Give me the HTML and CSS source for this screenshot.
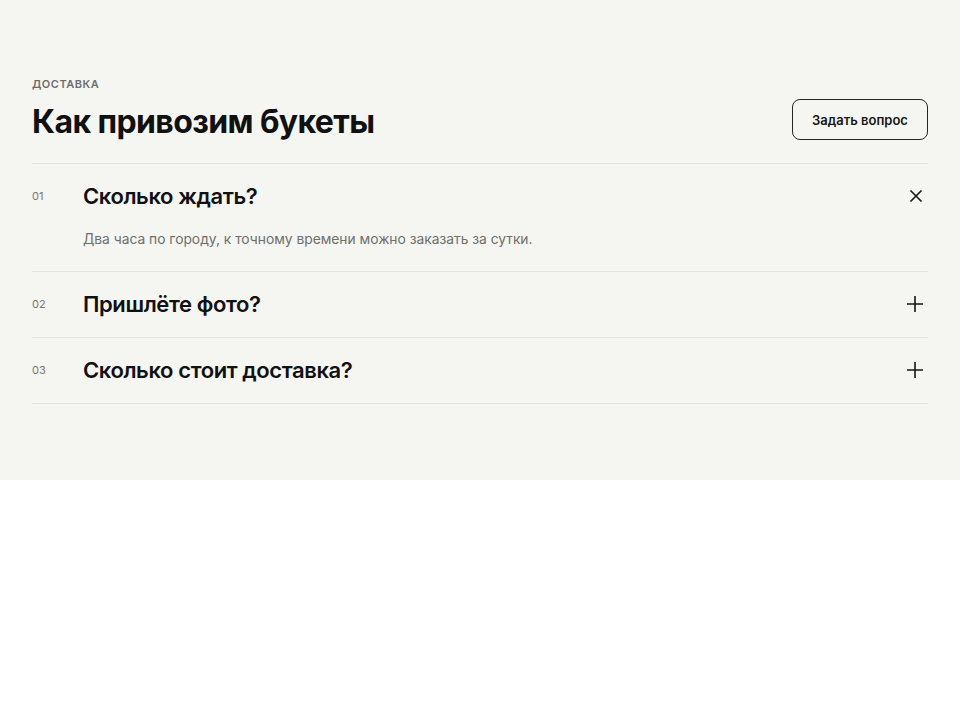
FILE: index.html
```html
<!DOCTYPE html>
<html lang="ru">
<head>
<meta charset="utf-8">
<link rel="stylesheet" href="styles.css">
</head>
<body>
<section class="faq">
  <header class="faq-head">
    <div class="faq-titles">
      <div class="eyebrow">ДОСТАВКА</div>
      <h2 class="title">Как привозим букеты</h2>
    </div>
    <button class="ask">Задать вопрос</button>
  </header>
  <div class="list">
    <div class="item open">
      <div class="q-row">
        <span class="num">01</span>
        <span class="q">Сколько ждать?</span>
        <svg class="icon" width="16" height="16" viewBox="0 0 16 16"><path d="M2.5 2.5L13.5 13.5M13.5 2.5L2.5 13.5" stroke="#161616" stroke-width="1.6" fill="none"/></svg>
      </div>
      <p class="answer">Два часа по городу, к точному времени можно заказать за сутки.</p>
    </div>
    <div class="item">
      <div class="q-row">
        <span class="num">02</span>
        <span class="q">Пришлёте фото?</span>
        <svg class="icon" width="18" height="18" viewBox="0 0 18 18"><path d="M9 1V17M1 9H17" stroke="#161616" stroke-width="1.6" fill="none"/></svg>
      </div>
    </div>
    <div class="item">
      <div class="q-row">
        <span class="num">03</span>
        <span class="q">Сколько стоит доставка?</span>
        <svg class="icon" width="18" height="18" viewBox="0 0 18 18"><path d="M9 1V17M1 9H17" stroke="#161616" stroke-width="1.6" fill="none"/></svg>
      </div>
    </div>
  </div>
</section>
</body>
</html>
```
FILE: styles.css
```css
* { box-sizing: border-box; }
body {
  margin: 0;
  background: #ffffff;
  font-family: Inter, "Noto Sans", "DejaVu Sans", sans-serif;
  color: #141414;
}
.faq {
  background: #f5f5f2;
  height: 480px;
  padding: 76px 32px 0;
}
.faq-head {
  display: flex;
  justify-content: space-between;
  align-items: flex-end;
  margin-bottom: 21px;
}
.faq-titles {
  display: flex;
  flex-direction: column;
  gap: 10px;
}
.eyebrow {
  font-size: 11px;
  line-height: 16px;
  font-weight: 600;
  letter-spacing: 0.5px;
  color: #6e6e6a;
}
.title {
  margin: 0;
  font-size: 32px;
  line-height: 40px;
  font-weight: 700;
  letter-spacing: -0.6px;
  color: #111;
}
.ask {
  margin-bottom: 2px;
  width: 136px;
  height: 41px;
  border: 1px solid #262626;
  border-radius: 8px;
  background: transparent;
  font-family: inherit;
  font-size: 13px;
  font-weight: 600;
  color: #161616;
  cursor: pointer;
}
.list {
  border-top: 1px solid #e4e3df;
}
.item {
  border-bottom: 1px solid #e4e3df;
  padding: 19px 0 20px;
}
.item.open {
  padding-top: 19px;
  padding-bottom: 21px;
}
.q-row {
  display: flex;
  align-items: center;
  height: 26px;
}
.num {
  width: 51px;
  flex: none;
  font-size: 11px;
  color: #77776f;
}
.q {
  flex: 1;
  font-size: 22px;
  line-height: 26px;
  font-weight: 600;
  letter-spacing: -0.4px;
  color: #111;
}
.icon {
  flex: none;
  margin-right: 4px;
}
.answer {
  margin: 19px 0 0 51px;
  font-size: 13.8px;
  line-height: 22px;
  color: #6f6f6a;
}
```
